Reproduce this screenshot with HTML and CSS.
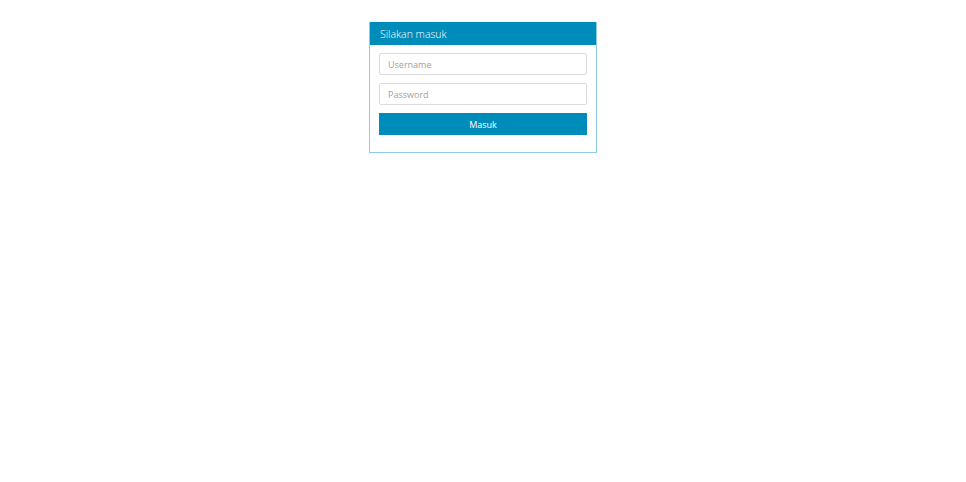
FILE: index.html
```html
<!DOCTYPE html>
<html>
<head>
<meta charset="utf-8">
<link rel="stylesheet" href="styles.css">
</head>
<body>
<div class="panel">
  <div class="panel-head">Silakan masuk</div>
  <form class="panel-body">
    <input class="field" type="text" placeholder="Username">
    <input class="field" type="password" placeholder="Password">
    <button class="btn" type="button">Masuk</button>
  </form>
</div>
</body>
</html>
```
FILE: styles.css
```css
html, body { margin: 0; padding: 0; background: #fff; }
body { font-family: "Open Sans", "Liberation Sans", sans-serif; }
.panel {
  width: 228px;
  box-sizing: border-box;
  margin: 22px 0 0 calc(50% - 114px);
  border: 1px solid #8ccde3;
  border-top: none;
}
.panel-head {
  height: 23px;
  box-sizing: border-box;
  padding-top: 1px;
  background: #008cba;
  color: #fff;
  font-size: 10.5px;
  font-weight: 300;
  line-height: 22px;
  padding-left: 10px;
}
.panel-body {
  display: flex;
  flex-direction: column;
  gap: 8px;
  padding: 8px 9px 17px;
  margin: 0;
}
.field {
  height: 22px;
  box-sizing: border-box;
  border: 1px solid #dcdcdc;
  border-radius: 2px;
  padding: 0 8px;
  font-family: inherit;
  font-size: 9px;
  color: #333;
  margin: 0;
  outline: none;
}
.field::placeholder { color: #a0a0a0; }
.btn {
  height: 22px;
  border: none;
  background: #008cba;
  color: #fff;
  font-family: inherit;
  font-size: 9px;
  margin: 0;
  padding: 0;
}
```
